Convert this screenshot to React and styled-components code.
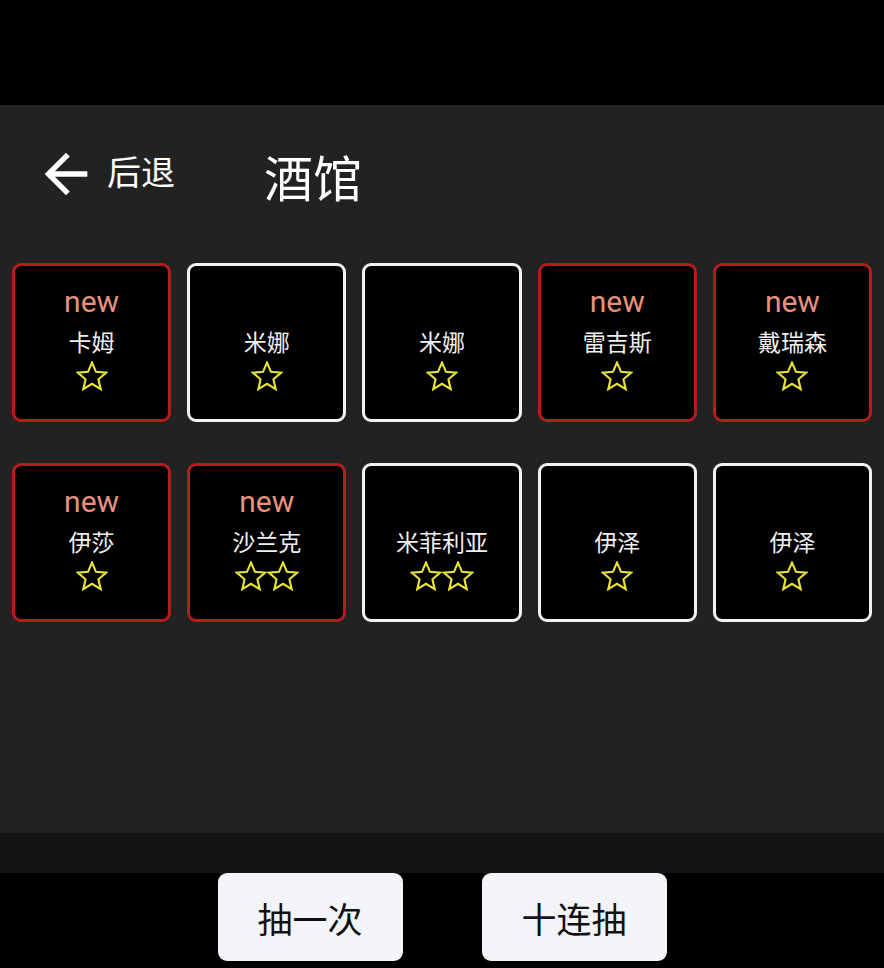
import React from "react";
import styled, { createGlobalStyle, css } from "styled-components";

const GlobalStyle = createGlobalStyle`
  html, body {
    margin: 0;
    padding: 0;
    background: #000;
  }
  * {
    box-sizing: border-box;
  }
`;

const cjk = `"Noto Sans CJK SC", "Noto Sans", sans-serif`;

const Page = styled.div`
  width: 884px;
  height: 968px;
  display: flex;
  flex-direction: column;
  background: #000;
  font-family: ${cjk};
`;

const StatusBar = styled.div`
  height: 105px;
  flex: none;
`;

const Panel = styled.div`
  height: 728px;
  flex: none;
  background: #222222;
`;

const Header = styled.div`
  height: 140px;
  display: flex;
  align-items: center;
  padding-left: 34px;
`;

const BackButton = styled.div`
  display: flex;
  align-items: center;
  cursor: pointer;
  color: #fff;
`;

const BackIcon = styled.svg`
  width: 64px;
  height: 64px;
  margin-bottom: 3px;
  fill: #fff;
`;

const BackLabel = styled.span`
  margin-left: 9px;
  margin-bottom: 9px;
  font-size: 34px;
  line-height: 1;
`;

const Title = styled.h1`
  margin: 0 0 0 89px;
  font-size: 49px;
  font-weight: 400;
  line-height: 1;
  color: #fff;
`;

const Grid = styled.div`
  margin-top: 18px;
  padding: 0 12px;
  display: grid;
  grid-template-columns: repeat(5, 1fr);
  column-gap: 16px;
  row-gap: 41px;
`;

const Card = styled.div`
  height: 159px;
  display: flex;
  flex-direction: column;
  align-items: center;
  padding-top: 18px;
  background: #000;
  border: 3px solid #f2f2f2;
  border-radius: 9px;

  ${(props) =>
    props.isNew &&
    css`
      border-color: #b51c1c;
    `}
`;

const NewTag = styled.div`
  font-family: Roboto, "Noto Sans", sans-serif;
  font-size: 30px;
  line-height: 36px;
  color: #e8927e;
  visibility: ${(props) => (props.show ? "visible" : "hidden")};
`;

const Name = styled.div`
  margin-top: 6px;
  font-size: 23px;
  line-height: 30px;
  color: #f0f0f0;
  white-space: nowrap;
`;

const Stars = styled.div`
  margin-top: 5px;
  display: flex;
`;

const StarIcon = styled.svg`
  width: 32px;
  height: 30px;
  fill: none;
  stroke: #e6e33a;
  stroke-width: 1.5;
  stroke-linejoin: miter;
`;

const Band = styled.div`
  height: 40px;
  flex: none;
  background: #141414;
`;

const Footer = styled.div`
  flex: 1;
  display: flex;
  justify-content: center;
  gap: 79px;
`;

const DrawButton = styled.button`
  width: 185px;
  height: 88px;
  border: none;
  border-radius: 9px;
  background: #f3f4f8;
  color: #111;
  font-family: ${cjk};
  font-size: 35px;
  cursor: pointer;
  padding: 0;
`;

const heroes = [
  { name: "卡姆", stars: 1, isNew: true },
  { name: "米娜", stars: 1 },
  { name: "米娜", stars: 1 },
  { name: "雷吉斯", stars: 1, isNew: true },
  { name: "戴瑞森", stars: 1, isNew: true },
  { name: "伊莎", stars: 1, isNew: true },
  { name: "沙兰克", stars: 2, isNew: true },
  { name: "米菲利亚", stars: 2 },
  { name: "伊泽", stars: 1 },
  { name: "伊泽", stars: 1 },
];

const Star = () => (
  <StarIcon viewBox="1 1.5 22 21">
    <path d="M12 2.6l2.8 6.5 7 .6-5.3 4.6 1.6 6.9L12 17.5l-6.1 3.7 1.6-6.9-5.3-4.6 7-.6z" />
  </StarIcon>
);

const App = () => {
  return (
    <Page>
      <GlobalStyle />
      <StatusBar />
      <Panel>
        <Header>
          <BackButton>
            <BackIcon viewBox="0 0 24 24">
              <path d="M20 11H7.83l5.59-5.59L12 4l-8 8 8 8 1.41-1.41L7.83 13H20v-2z" />
            </BackIcon>
            <BackLabel>后退</BackLabel>
          </BackButton>
          <Title>酒馆</Title>
        </Header>
        <Grid>
          {heroes.map((hero, i) => (
            <Card key={i} isNew={hero.isNew}>
              <NewTag show={hero.isNew}>new</NewTag>
              <Name>{hero.name}</Name>
              <Stars>
                {Array.from({ length: hero.stars }, (_, s) => (
                  <Star key={s} />
                ))}
              </Stars>
            </Card>
          ))}
        </Grid>
      </Panel>
      <Band />
      <Footer>
        <DrawButton>抽一次</DrawButton>
        <DrawButton>十连抽</DrawButton>
      </Footer>
    </Page>
  );
};

export default App;
